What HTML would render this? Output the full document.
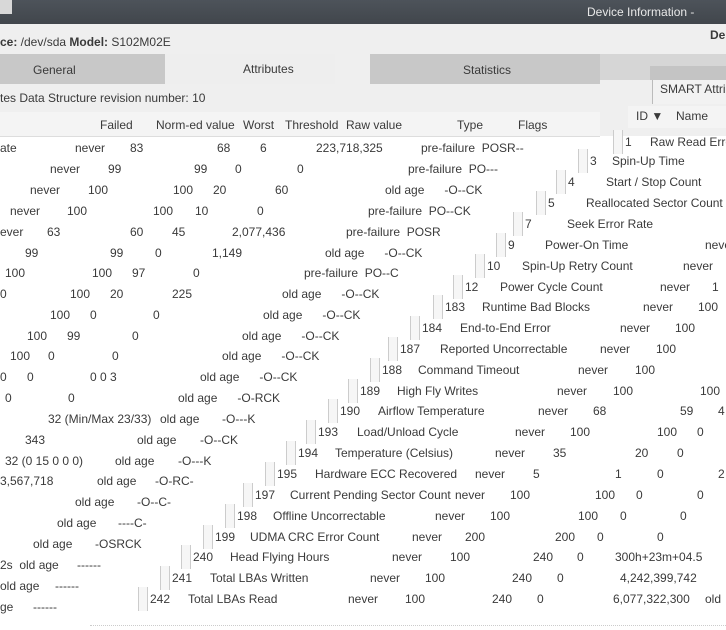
<!DOCTYPE html><html><head><meta charset="utf-8"><style>
body{margin:0;width:726px;height:630px;overflow:hidden;background:#fff;font-family:"Liberation Sans","DejaVu Sans",sans-serif;font-size:12px;color:#3a3a3a;position:relative}
.a{position:absolute;white-space:pre;line-height:14px}
.b{position:absolute}
</style></head><body>
<div class="b" style="left:0;top:0;width:726px;height:24px;background:linear-gradient(#4d535a,#41464c)"></div>
<div class="b" style="left:0;top:0;width:12px;height:14px;background:#d8d8d8"></div>
<div class="a" style="left:587px;top:5px;color:#e8e8e8;font-size:12px">Device Information -</div>
<div class="b" style="left:0;top:24px;width:726px;height:112px;background:#efefef"></div>
<div class="a" style="left:0;top:35px"><b>ce:</b> /dev/sda <b>Model:</b> S102M02E</div>
<div class="a" style="left:710px;top:28px;font-weight:bold">De</div>
<div class="b" style="left:0;top:54px;width:165px;height:30px;background:#c8c8c8"></div>
<div class="b" style="left:165px;top:54px;width:170px;height:30px;background:#eeeeee"></div>
<div class="b" style="left:370px;top:54px;width:230px;height:30px;background:#c8c8c8"></div>
<div class="b" style="left:600px;top:54px;width:126px;height:26px;background:#d6d6d6"></div>
<div class="b" style="left:650px;top:66px;width:76px;height:14px;background:#c4c4c4"></div>
<div class="a" style="left:33px;top:63px">General</div>
<div class="a" style="left:243px;top:62px">Attributes</div>
<div class="a" style="left:463px;top:63px">Statistics</div>
<div class="b" style="left:652px;top:80px;width:74px;height:24px;border-left:1px solid #bbb;background:#f2f2f2"></div>
<div class="a" style="left:660px;top:82px">SMART Attrib</div>
<div class="a" style="left:0;top:91px">tes Data Structure revision number: 10</div>
<div class="b" style="left:0;top:112px;width:600px;height:24px;background:#f4f4f4;border-bottom:1px solid #ddd"></div>
<div class="b" style="left:628px;top:106px;width:98px;height:22px;background:#f4f4f4"></div>
<div class="a" style="left:100px;top:118px">Failed</div>
<div class="a" style="left:156px;top:118px">Norm-ed value</div>
<div class="a" style="left:243px;top:118px">Worst</div>
<div class="a" style="left:285px;top:118px">Threshold</div>
<div class="a" style="left:346px;top:118px">Raw value</div>
<div class="a" style="left:457px;top:118px">Type</div>
<div class="a" style="left:518px;top:118px">Flags</div>
<div class="a" style="left:636px;top:109px">ID ▼</div>
<div class="a" style="left:676px;top:109px">Name</div>
<div class="b" style="left:90px;width:636px;border-top:1px dotted #ccc;top:625px"></div>
<script>
var L=[[148,[[0,"ate"],[75,"never"],[130,"83"],[217,"68"],[260,"6"],[316,"223,718,325"],[421,"pre-failure  POSR--"]]],
[169,[[50,"never"],[108,"99"],[194,"99"],[235,"0"],[297,"0"],[408,"pre-failure  PO---"]]],
[190,[[30,"never"],[88,"100"],[173,"100"],[213,"20"],[275,"60"],[385,"old age      -O--CK"]]],
[211,[[10,"never"],[67,"100"],[153,"100"],[195,"10"],[257,"0"],[368,"pre-failure  PO--CK"]]],
[232,[[0,"ever"],[47,"63"],[130,"60"],[172,"45"],[232,"2,077,436"],[346,"pre-failure  POSR"]]],
[253,[[25,"99"],[110,"99"],[155,"0"],[212,"1,149"],[325,"old age      -O--CK"]]],
[273,[[5,"100"],[92,"100"],[132,"97"],[193,"0"],[304,"pre-failure  PO--C"]]],
[294,[[0,"0"],[70,"100"],[110,"20"],[172,"225"],[282,"old age      -O--CK"]]],
[315,[[50,"100"],[90,"0"],[153,"0"],[263,"old age      -O--CK"]]],
[336,[[27,"100"],[67,"99"],[132,"0"],[242,"old age      -O--CK"]]],
[356,[[10,"100"],[48,"0"],[112,"0"],[222,"old age      -O--CK"]]],
[377,[[0,"0"],[27,"0"],[90,"0 0 3"],[200,"old age      -O--CK"]]],
[398,[[5,"0"],[68,"0"],[178,"old age      -O-RCK"]]],
[419,[[48,"32 (Min/Max 23/33)"],[160,"old age"],[222,"-O---K"]]],
[440,[[25,"343"],[137,"old age"],[200,"-O--CK"]]],
[461,[[5,"32 (0 15 0 0 0)"],[115,"old age"],[178,"-O---K"]]],
[481,[[0,"3,567,718"],[97,"old age"],[155,"-O-RC-"]]],
[502,[[75,"old age"],[137,"-O--C-"]]],
[523,[[57,"old age"],[118,"----C-"]]],
[544,[[33,"old age"],[95,"-OSRCK"]]],
[565,[[0,"2s  old age"],[77,"------"]]],
[586,[[0,"old age"],[55,"------"]]],
[607,[[0,"ge"],[33,"------"]]]];
var R=[[142,[[625,"1"],[650,"Raw Read Error"]]],
[161,[[590,"3"],[612,"Spin-Up Time"]]],
[182,[[568,"4"],[606,"Start / Stop Count"]]],
[203,[[548,"5"],[586,"Reallocated Sector Count"]]],
[224,[[525,"7"],[567,"Seek Error Rate"]]],
[245,[[508,"9"],[545,"Power-On Time"],[705,"never"]]],
[266,[[487,"10"],[522,"Spin-Up Retry Count"],[683,"never"]]],
[287,[[465,"12"],[500,"Power Cycle Count"],[660,"never"],[712,"1"]]],
[307,[[445,"183"],[482,"Runtime Bad Blocks"],[643,"never"],[698,"100"]]],
[328,[[422,"184"],[460,"End-to-End Error"],[620,"never"],[675,"100"]]],
[349,[[400,"187"],[440,"Reported Uncorrectable"],[600,"never"],[656,"100"]]],
[370,[[382,"188"],[418,"Command Timeout"],[578,"never"],[635,"100"]]],
[391,[[360,"189"],[397,"High Fly Writes"],[557,"never"],[613,"100"],[700,"100"]]],
[411,[[340,"190"],[378,"Airflow Temperature"],[538,"never"],[593,"68"],[680,"59"],[718,"4"]]],
[432,[[318,"193"],[357,"Load/Unload Cycle"],[515,"never"],[570,"100"],[657,"100"],[697,"0"]]],
[453,[[298,"194"],[335,"Temperature (Celsius)"],[495,"never"],[553,"35"],[635,"20"],[677,"0"]]],
[474,[[277,"195"],[315,"Hardware ECC Recovered"],[475,"never"],[533,"5"],[615,"1"],[657,"0"],[718,"2"]]],
[495,[[255,"197"],[290,"Current Pending Sector Count"],[455,"never"],[510,"100"],[595,"100"],[636,"0"],[697,"0"]]],
[516,[[237,"198"],[273,"Offline Uncorrectable"],[435,"never"],[490,"100"],[578,"100"],[620,"0"],[680,"0"]]],
[537,[[215,"199"],[250,"UDMA CRC Error Count"],[412,"never"],[465,"200"],[555,"200"],[597,"0"],[657,"0"]]],
[557,[[193,"240"],[230,"Head Flying Hours"],[392,"never"],[450,"100"],[533,"240"],[577,"0"],[615,"300h+23m+04.5"]]],
[578,[[172,"241"],[210,"Total LBAs Written"],[370,"never"],[425,"100"],[512,"240"],[557,"0"],[620,"4,242,399,742"]]],
[599,[[150,"242"],[188,"Total LBAs Read"],[348,"never"],[405,"100"],[492,"240"],[537,"0"],[613,"6,077,322,300"],[705,"old"]]]];
var h="";
function add(A,bar){A.forEach(function(r){var y=r[0];if(bar){var x=r[1][0][0];h+='<div class="b" style="left:'+(x-12)+'px;top:'+(y-12)+'px;width:8px;height:24px;border-left:1px solid #ccc;border-right:1px solid #ccc;background:#f6f6f6"></div>';}
r[1].forEach(function(c){h+='<div class="a" style="left:'+c[0]+'px;top:'+(y-7)+'px">'+c[1]+'</div>';});});}
add(L,false);add(R,true);
document.body.insertAdjacentHTML("beforeend",h);
</script>
</body></html>
